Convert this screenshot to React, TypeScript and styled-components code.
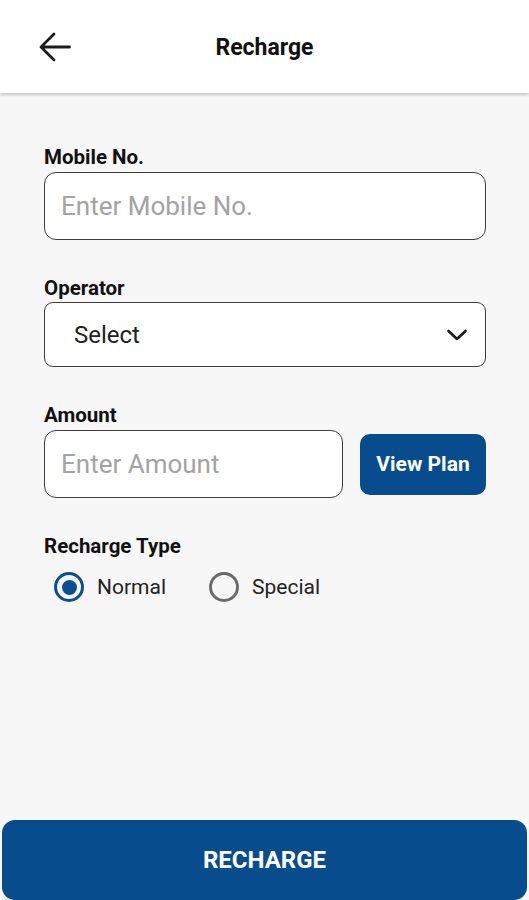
import React from "react";
import styled, { createGlobalStyle } from "styled-components";

const Global = createGlobalStyle`
  html, body { margin: 0; padding: 0; }
  body {
    background: #f7f7f7;
    font-family: Roboto, "Noto Sans", "Liberation Sans", sans-serif;
    color: #111;
  }
  * { box-sizing: border-box; }
`;

const Screen = styled.div`
  width: 529px;
  height: 900px;
  display: flex;
  flex-direction: column;
  background: #f7f7f7;
  overflow: hidden;
`;

const Header = styled.header`
  height: 93px;
  flex: none;
  background: #ffffff;
  box-shadow: 0 2px 3px rgba(0, 0, 0, 0.2);
  display: grid;
  grid-template-columns: 100px 1fr 100px;
  align-items: center;
  position: relative;
  z-index: 1;
`;

const BackButton = styled.button`
  border: none;
  background: transparent;
  padding: 0;
  margin-left: 39px;
  width: 32px;
  height: 30px;
  display: flex;
  align-items: center;
  cursor: pointer;
`;

const Title = styled.h1`
  margin: 0;
  text-align: center;
  font-size: 23px;
  font-weight: 700;
  color: #111;
  padding-top: 1px;
`;

const Form = styled.main`
  flex: 1;
  padding: 53px 43px 0 44px;
  display: flex;
  flex-direction: column;
`;

const Field = styled.div<{ $gap?: number }>`
  display: flex;
  flex-direction: column;
  gap: ${(p) => p.$gap ?? 4}px;
  margin-bottom: 37px;
`;

const Label = styled.label`
  font-size: 20.5px;
  font-weight: 700;
  line-height: 22px;
  color: #111;
`;

const Input = styled.input`
  height: 68px;
  width: 100%;
  border: 1.5px solid #3c3c3c;
  border-radius: 12px;
  background: #ffffff;
  padding: 0 16px;
  font-family: Roboto, "Noto Sans", sans-serif;
  font-size: 26px;
  color: #222;
  outline: none;
  &::placeholder { color: #a3a3a3; }
`;

const SelectBox = styled.div`
  height: 65px;
  border: 1.5px solid #3c3c3c;
  border-radius: 9px;
  background: #ffffff;
  display: flex;
  align-items: center;
  justify-content: space-between;
  padding: 0 17px 0 29px;
  font-size: 24px;
  color: #222;
`;

const AmountRow = styled.div`
  display: flex;
  align-items: center;
  gap: 17px;
`;

const ViewPlan = styled.button`
  flex: none;
  width: 126px;
  height: 61px;
  border: none;
  border-radius: 10px;
  background: #074c8c;
  color: #fff;
  font-family: Roboto, "Noto Sans", sans-serif;
  font-size: 21px;
  font-weight: 700;
`;

const RadioRow = styled.div`
  display: flex;
  align-items: center;
  gap: 43px;
  padding-left: 10px;
  margin-top: 11px;
`;

const RadioOption = styled.label`
  display: flex;
  align-items: center;
  gap: 13px;
  font-size: 21px;
  color: #222;
`;

const RadioCircle = styled.span<{ $on: boolean }>`
  width: 30px;
  height: 30px;
  border-radius: 50%;
  border: 3px solid ${(p) => (p.$on ? "#0b4f8e" : "#6b6b6b")};
  display: flex;
  align-items: center;
  justify-content: center;
  &::after {
    content: "";
    width: 15px;
    height: 15px;
    border-radius: 50%;
    background: ${(p) => (p.$on ? "#0b4f8e" : "transparent")};
  }
`;

const Footer = styled.div`
  flex: none;
  padding: 0 2px;
`;

const RechargeButton = styled.button`
  width: 100%;
  height: 80px;
  border: none;
  border-radius: 13px;
  background: #074c8c;
  color: #fff;
  font-family: Roboto, "Noto Sans", sans-serif;
  font-size: 24px;
  font-weight: 700;
  padding-bottom: 2px;
`;

export default function App() {
  return (
    <>
      <Global />
      <Screen>
        <Header>
          <BackButton aria-label="Back">
            <svg width="32" height="30" viewBox="0 0 32 30" fill="none">
              <path
                d="M2 15 H30.5 M15 2 L2 15 L15 28"
                stroke="#1a1a1a"
                strokeWidth="2.8"
                strokeLinecap="round"
                strokeLinejoin="round"
              />
            </svg>
          </BackButton>
          <Title>Recharge</Title>
          <span />
        </Header>
        <Form>
          <Field>
            <Label>Mobile No.</Label>
            <Input placeholder="Enter Mobile No." />
          </Field>
          <Field $gap={3}>
            <Label>Operator</Label>
            <SelectBox>
              <span>Select</span>
              <svg width="22" height="14" viewBox="0 0 22 14" fill="none">
                <path
                  d="M2.5 3 L11 11 L19.5 3"
                  stroke="#1a1a1a"
                  strokeWidth="2.6"
                  strokeLinecap="round"
                  strokeLinejoin="round"
                />
              </svg>
            </SelectBox>
          </Field>
          <Field>
            <Label>Amount</Label>
            <AmountRow>
              <Input placeholder="Enter Amount" />
              <ViewPlan>View Plan</ViewPlan>
            </AmountRow>
          </Field>
          <Field>
            <Label>Recharge Type</Label>
            <RadioRow>
              <RadioOption>
                <RadioCircle $on />
                Normal
              </RadioOption>
              <RadioOption>
                <RadioCircle $on={false} />
                Special
              </RadioOption>
            </RadioRow>
          </Field>
        </Form>
        <Footer>
          <RechargeButton>RECHARGE</RechargeButton>
        </Footer>
      </Screen>
    </>
  );
}
